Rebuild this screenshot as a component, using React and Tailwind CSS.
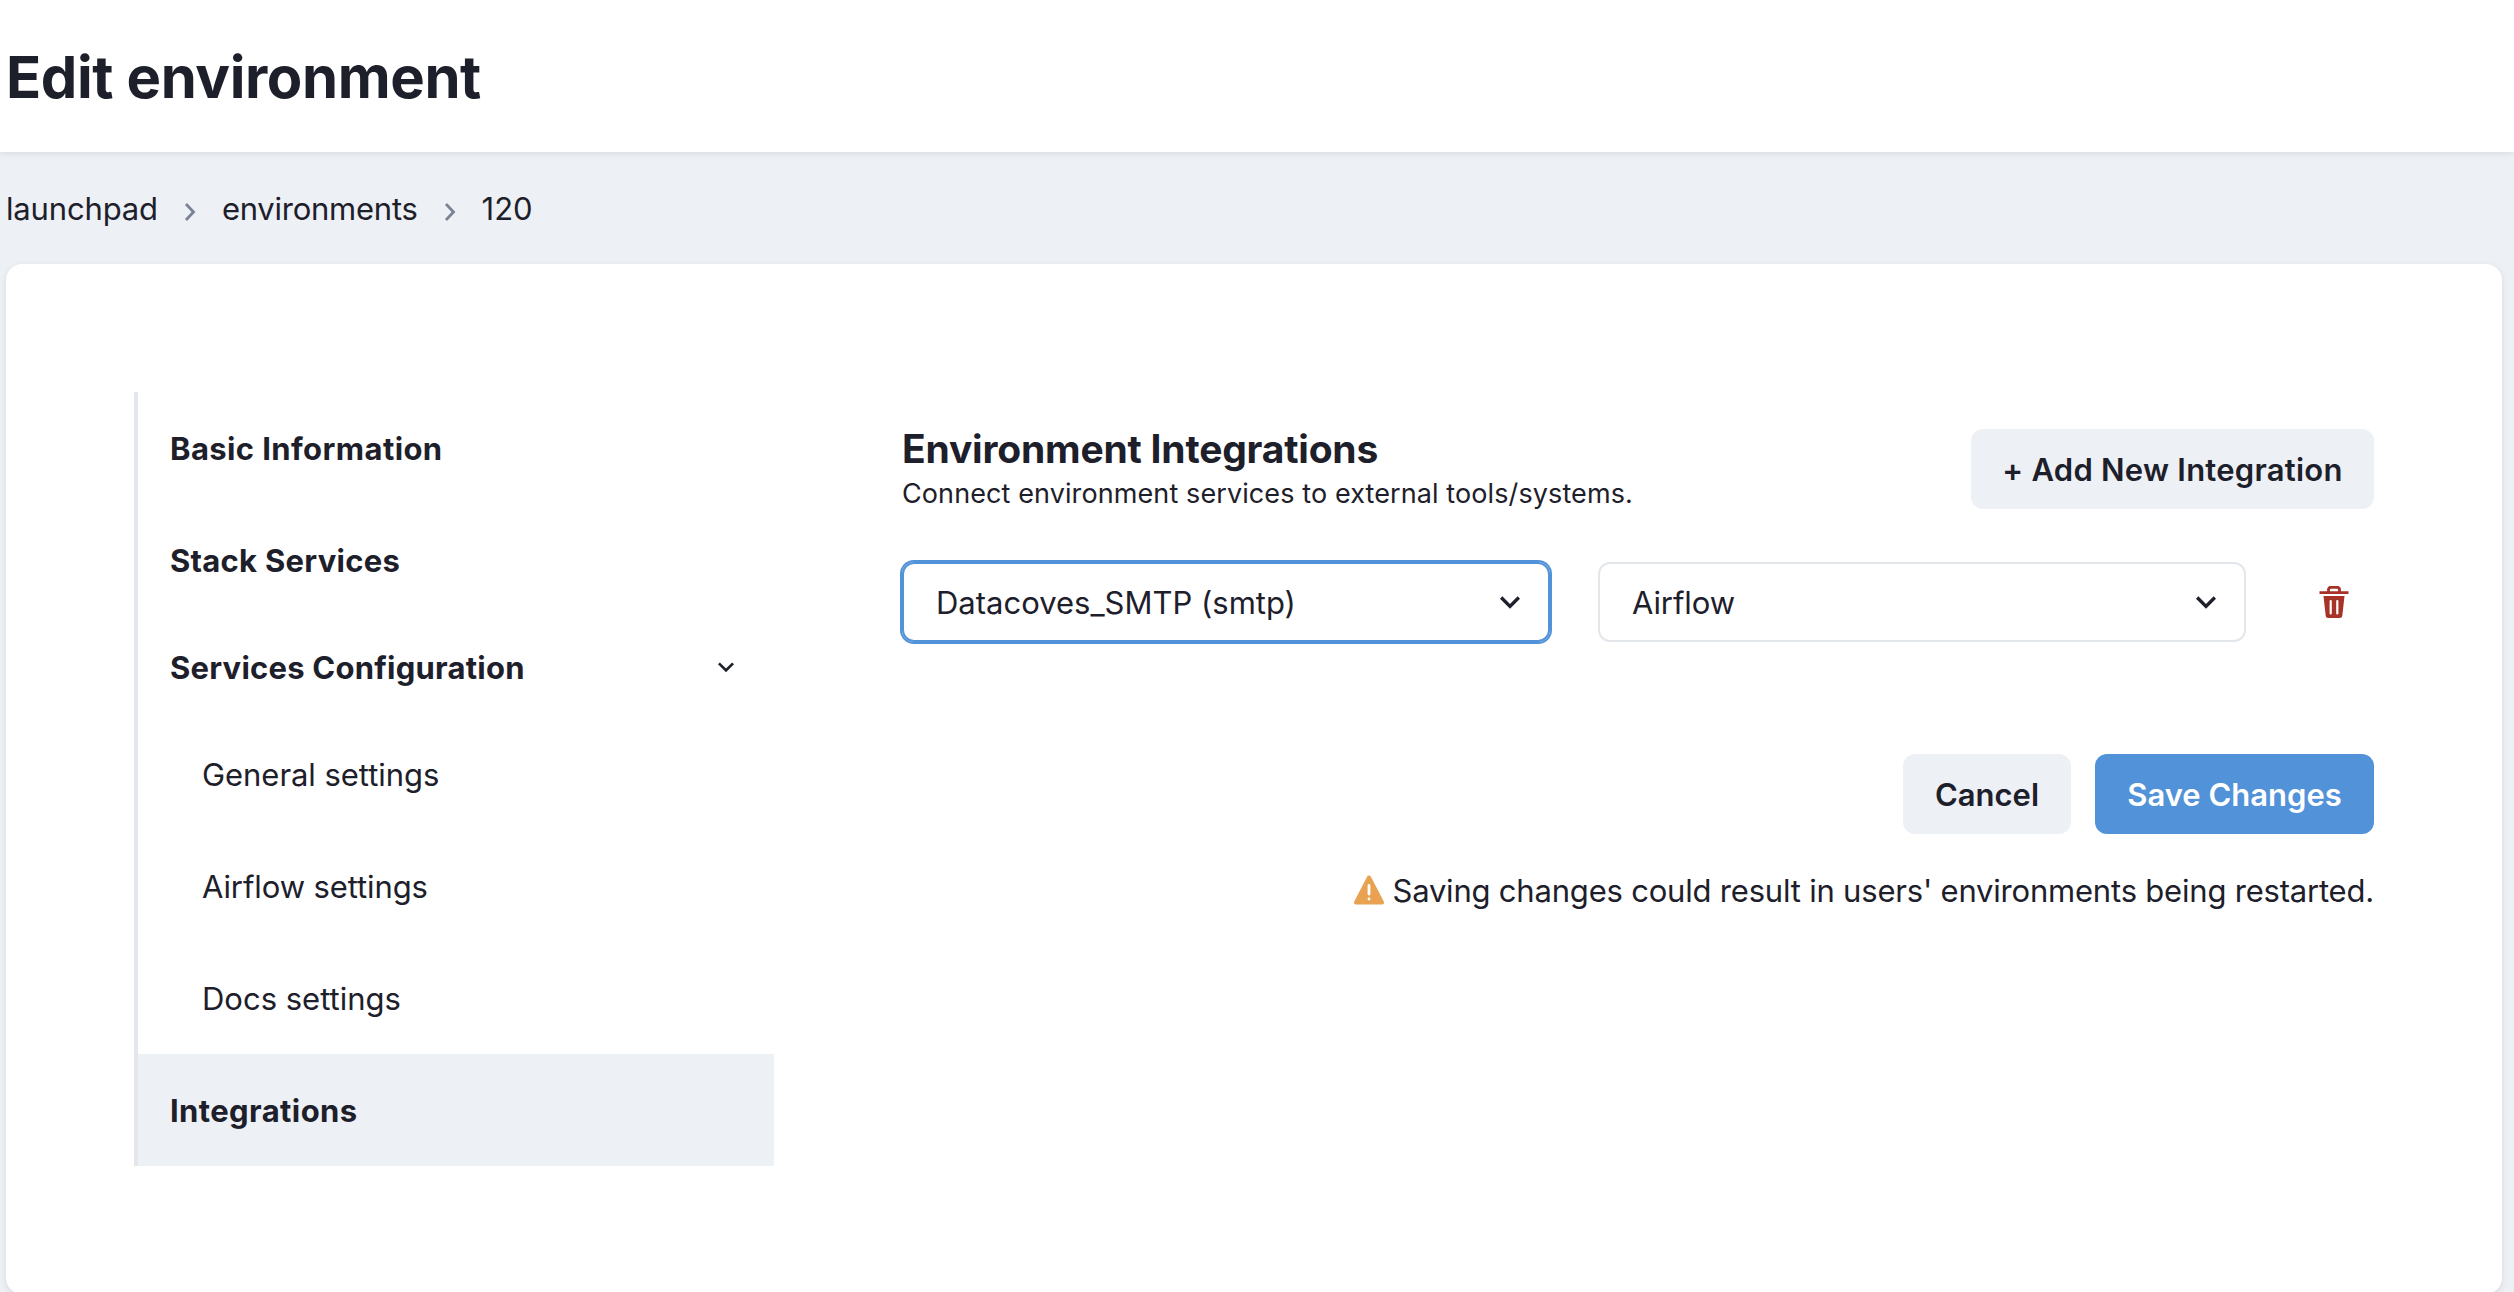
import React from "react";

const chakraChevron = "M16.59 8.59L12 13.17 7.41 8.59 6 10l6 6 6-6z";

function NavItem({ children, className = "" }) {
  return (
    <div className={`flex h-28 items-center pt-[2px] ${className}`}>
      <span>{children}</span>
    </div>
  );
}

function Select({ children, className }) {
  return (
    <div className={`flex h-20 w-[648px] items-center justify-between rounded-xl border-2 pl-8 pr-[18px] ${className}`}>
      <span className="pt-px">{children}</span>
      <svg viewBox="0 0 24 24" className="size-10 fill-current">
        <path d={chakraChevron} />
      </svg>
    </div>
  );
}

function Separator() {
  return (
    <span className="px-6 pt-[5px]">
      <svg viewBox="0 0 16 20" className="h-5 w-4 fill-none stroke-[#7a8394]" strokeWidth="2.8">
        <path d="M4 2l7.500 8L4 18" />
      </svg>
    </span>
  );
}

export default function App() {
  return (
    <div className="h-[1292px] w-[2514px] overflow-hidden bg-[#edf0f5] font-['Inter',sans-serif] text-[31px] leading-[48px] text-[#1d202a]">
      <header className="flex h-[152px] items-center bg-white pl-[6px] shadow-[0_2px_6px_rgba(0,0,0,0.08)]">
        <h1 className="pt-px text-[58px] font-bold leading-[72px] tracking-[-0.4px]">Edit environment</h1>
      </header>
      <nav className="flex h-28 items-center pl-[6px] pt-[2px]">
        <span className="tracking-[-0.15px]">launchpad</span>
        <Separator />
        <span className="tracking-[-0.25px]">environments</span>
        <Separator />
        <span>120</span>
      </nav>
      <main className="ml-[6px] flex h-[1030px] w-[2496px] items-start rounded-2xl bg-white pl-32 pt-32 shadow-[0_2px_6px_rgba(0,0,0,0.1)]">
        <aside className="w-[640px] border-l-4 border-[#e3e7ec]">
          <NavItem className="pl-8 font-bold tracking-[0.4px]">Basic Information</NavItem>
          <NavItem className="pl-8 font-bold tracking-[0.27px]">Stack Services</NavItem>
          <div className="flex h-[102px] items-center justify-between px-8 pt-[2px] font-bold tracking-[0.23px]">
            <span>Services Configuration</span>
            <svg viewBox="0 0 24 24" className="-mt-[3px] size-8 fill-current">
              <path d={chakraChevron} />
            </svg>
          </div>
          <NavItem className="pl-16 tracking-[-0.05px]">General settings</NavItem>
          <NavItem className="pl-16 tracking-[-0.1px]">Airflow settings</NavItem>
          <NavItem className="pl-16">Docs settings</NavItem>
          <NavItem className="bg-[#edf0f5] pl-8 font-bold tracking-[0.4px]">Integrations</NavItem>
        </aside>
        <section className="ml-32 w-[1472px] pt-[37px]">
          <div className="flex h-20 items-start justify-between">
            <div className="-mt-[4px]">
              <h2 className="text-[39px] font-bold leading-[48px] tracking-[-0.2px]">Environment Integrations</h2>
              <p className="pt-px text-[27px] leading-[40px] tracking-[0.1px]">Connect environment services to external tools/systems.</p>
            </div>
            <button className="h-20 w-[403px] rounded-xl bg-[#edf0f5] pt-[2px] font-semibold tracking-[0.25px]">+ Add New Integration</button>
          </div>
          <div className="mt-[53px] flex items-center">
            <Select className="border-[#5292d9] shadow-[0_0_0_2px_#5292d9]">Datacoves_SMTP (smtp)</Select>
            <Select className="ml-12 border-[#e3e7ec] tracking-[-0.1px]">Airflow</Select>
            <svg viewBox="0 0 30 32" className="ml-[73px] h-8 w-[30px]">
              <path d="M0.500 6.700h29M9.500 6V3.800q0-2.500 2.500-2.500h6q2.500 0 2.500 2.500V6" fill="none" stroke="#a63228" strokeWidth="2.8" />
              <path d="M4.500 10h21l-2.200 19.700q-.2 2.300-2.500 2.300H9.200q-2.300 0-2.500-2.300z" fill="#a63228" />
              <path d="M11.700 15v12.500M18.300 15v12.500" stroke="white" strokeWidth="2.2" strokeLinecap="round" />
            </svg>
          </div>
          <div className="mt-28 flex justify-end gap-6">
            <button className="h-20 w-[168px] rounded-xl bg-[#edf0f5] pt-[2px] font-semibold">Cancel</button>
            <button className="h-20 w-[279px] rounded-xl bg-[#5292d9] pt-[2px] font-semibold text-white">Save Changes</button>
          </div>
          <div className="mt-8 flex items-center justify-end gap-2">
            <svg viewBox="0 0 30 30" className="-mt-px size-[30px]">
              <path d="M15 2.500L28 27.500H2z" fill="#e8a251" stroke="#e8a251" strokeWidth="4" strokeLinejoin="round" />
              <path d="M15 10.500v8.500M15 24v.1" stroke="white" strokeWidth="2.800" strokeLinecap="round" />
            </svg>
            <p className="pt-px tracking-[-0.2px]">Saving changes could result in users' environments being restarted.</p>
          </div>
        </section>
      </main>
    </div>
  );
}
